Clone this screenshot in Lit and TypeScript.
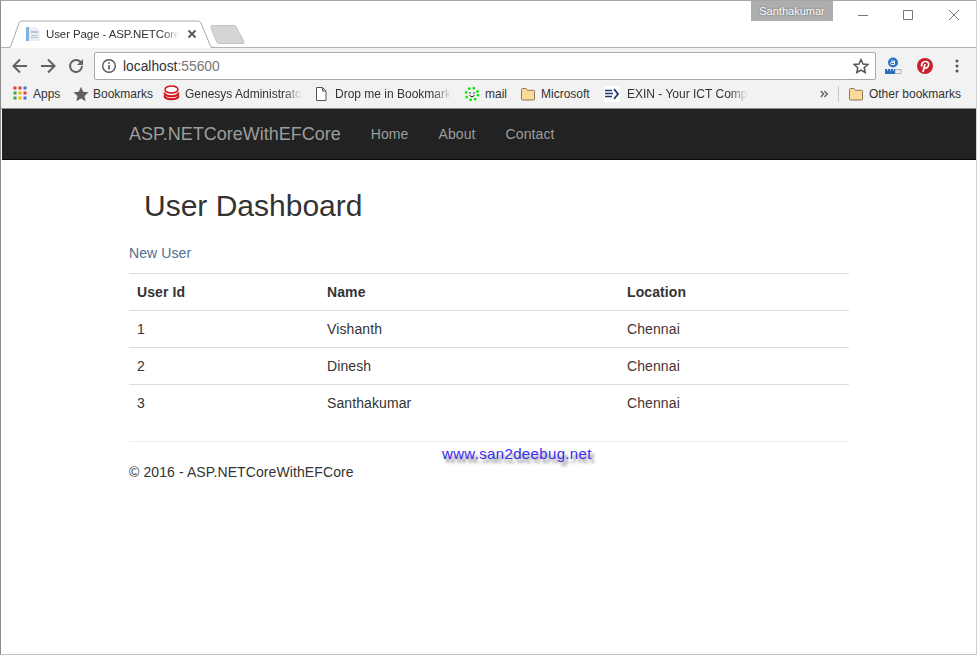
import { LitElement, html, css, svg } from "lit";
import { customElement } from "lit/decorators.js";

const folder = svg`<svg class="bm-ic" viewBox="0 0 16 16" width="16" height="16"><path d="M1.500 13V3.500q0-1 1-1h3.500l1.500 1.800h6q1 0 1 1V13q0 1-1 1h-11q-1 0-1-1z" fill="#fbd998" stroke="#8f7a55"/></svg>`;

const rows = [
  ["1", "Vishanth", "Chennai"],
  ["2", "Dinesh", "Chennai"],
  ["3", "Santhakumar", "Chennai"],
];

@customElement("app-root")
export class AppRoot extends LitElement {
  static styles = css`
    :host {
      display: block;
      width: 977px;
      height: 655px;
      overflow: hidden;
      font-family: "Liberation Sans", Arial, sans-serif;
      background: #fff;
    }
    .window {
      box-sizing: border-box;
      height: 655px;
      border-top: 1px solid #a6a6a6;
      border-left: 1px solid #8c8c8c;
      border-right: 1px solid #d0d0d0;
      border-bottom: 1px solid #c0c0c0;
      display: flex;
      flex-direction: column;
    }
    /* title strip */
    .strip {
      height: 47px;
      box-sizing: border-box;
      display: flex;
      align-items: flex-end;
      border-bottom: 1px solid #b4b4b4;
      position: relative;
      flex: none;
    }
    .tab {
      position: relative;
      width: 206px;
      height: 28px;
      margin-left: 7px;
      margin-bottom: -1px;
      display: flex;
      align-items: center;
      box-sizing: border-box;
      padding: 0 0 0 17px;
      font-size: 11.5px;
      letter-spacing: -0.1px;
      color: #333;
    }
    .tab-bg {
      position: absolute;
      left: 0;
      top: 0;
    }
    .tab > :not(.tab-bg) {
      position: relative;
    }
    .tab-title {
      margin-left: 5px;
      width: 133px;
      white-space: nowrap;
      overflow: hidden;
      -webkit-mask-image: linear-gradient(to right, #000 88%, transparent);
      mask-image: linear-gradient(to right, #000 88%, transparent);
    }
    .tab-x {
      margin-left: 8px;
    }
    .newtab {
      margin: 0 0 2px -4px;
    }
    .user {
      position: absolute;
      left: 750px;
      top: 0;
      width: 82px;
      height: 20px;
      background: #aeaeae;
      color: #fff;
      font-size: 11px;
      display: flex;
      align-items: center;
      justify-content: center;
      text-shadow: 0 0 2px #555;
    }
    .winbtns {
      position: absolute;
      right: 0;
      top: 0;
      display: flex;
    }
    .winbtns svg {
      display: block;
    }
    /* toolbar */
    .toolbar {
      height: 33px;
      box-sizing: border-box;
      background: #f2f2f2;
      display: flex;
      align-items: center;
      padding: 3px 0 0 9px;
      flex: none;
    }
    .nav-ic {
      display: block;
      margin-right: 8px;
    }
    .omni {
      box-sizing: border-box;
      width: 782px;
      height: 28px;
      background: #fff;
      border: 1px solid #a9a9a9;
      border-radius: 2px;
      display: flex;
      align-items: center;
      padding: 0 6px 0 6px;
      font-size: 13.8px;
      color: #333;
    }
    .omni .port {
      color: #777;
    }
    .omni .info {
      margin-right: 6px;
    }
    .omni .star {
      margin-left: auto;
    }
    .ext {
      display: flex;
      align-items: center;
    }
    .ext-a {
      margin-left: 7px;
    }
    .ext-p {
      margin-left: 13px;
    }
    .ext-m {
      margin-left: 21px;
    }
    /* bookmarks */
    .bookmarks {
      height: 28px;
      box-sizing: border-box;
      background: #f2f2f2;
      border-bottom: 1px solid #8f8f8f;
      display: flex;
      align-items: center;
      font-size: 12px;
      color: #333;
      padding: 0 0 2px 12px;
      white-space: nowrap;
      flex: none;
    }
    .bm {
      display: flex;
      align-items: center;
      gap: 5px;
      flex: none;
    }
    .bm.tight {
      gap: 4px;
    }
    .bm.wide {
      gap: 7px;
    }
    .w-apps {
      width: 60px;
    }
    .w-book {
      width: 90px;
    }
    .w-gen {
      width: 151px;
    }
    .w-drop {
      width: 150px;
    }
    .w-mail {
      width: 56px;
    }
    .w-ms {
      width: 84px;
    }
    .w-other {
      margin-right: 15px;
    }
    .bm-ic {
      display: block;
      flex: none;
    }
    .fade {
      white-space: nowrap;
      -webkit-mask-image: linear-gradient(to right, #000 85%, transparent);
      mask-image: linear-gradient(to right, #000 85%, transparent);
    }
    .more {
      margin-left: auto;
      display: block;
    }
    .sep {
      width: 1px;
      height: 16px;
      background: #c8c8c8;
      margin: 0 9px 0 10px;
    }
    /* page */
    .navbar {
      height: 51px;
      box-sizing: border-box;
      background: #222;
      border-bottom: 1px solid #080808;
      display: flex;
      align-items: center;
      margin-left: 1px;
      padding-left: 127px;
      flex: none;
    }
    .brand {
      color: #9d9d9d;
      font-size: 18px;
      margin-right: 30px;
    }
    .navbar a {
      color: #9d9d9d;
      font-size: 14px;
      letter-spacing: 0.1px;
      margin-right: 30px;
      text-decoration: none;
    }
    .container {
      width: 720px;
      margin-left: 128px;
      font-size: 14px;
      letter-spacing: 0.1px;
      color: #333;
      position: relative;
    }
    h2 {
      margin: 29px 0 0 15px;
      font-size: 30px;
      font-weight: 500;
      letter-spacing: 0;
      line-height: 33px;
      color: #333;
    }
    .new {
      display: block;
      margin-top: 21px;
      line-height: 20px;
      color: #4f6f93;
      text-decoration: none;
    }
    table {
      width: 720px;
      margin-top: 10px;
      border-collapse: collapse;
      table-layout: fixed;
    }
    th,
    td {
      text-align: left;
      padding: 8px;
      line-height: 20px;
      border-top: 1px solid #ddd;
      box-sizing: border-box;
    }
    .c1 {
      width: 190px;
    }
    .c2 {
      width: 300px;
    }
    .loc {
      color: #4a3333;
    }
    hr {
      margin: 20px 0 0;
      border: 0;
      border-top: 1px solid #eee;
    }
    footer {
      margin-top: 20px;
      line-height: 20px;
    }
    .mark {
      position: absolute;
      left: 313px;
      top: 285px;
      font-size: 15px;
      line-height: 18px;
      letter-spacing: 0.35px;
      color: #3a2cf0;
      text-shadow: 3px 4px 3px #888;
    }
  `;

  render() {
    return html`
      <div class="window">
        <div class="strip">
          <div class="tab">
            <svg class="tab-bg" width="206" height="28" viewBox="0 0 206 28">
              <path d="M0 28L11 3q1-2 3-2h176q2 0 3 2l10 25z" fill="#fff"/>
              <path d="M0 27.500h1q1 0 2-2L11 3q1-2 3-2h176q2 0 3 2l9 22q1 2.500 4 2.500" fill="none" stroke="#a9a9a9"/>
            </svg>
            <svg width="16" height="16" viewBox="0 0 16 16">
              <path d="M1 1h10l4 4v10H1z" fill="#e9eef5"/>
              <path d="M1 1h3v14H1z" fill="#7fb2dc"/>
              <path d="M6 5h7v2H6zM6 9h7v1H6zM6 11h7v1H6z" fill="#b5c4d6"/>
            </svg>
            <span class="tab-title">User Page - ASP.NETCore</span>
            <svg class="tab-x" width="10" height="10" viewBox="0 0 10 10">
              <path d="M1.500 1.500l7 7M8.500 1.500l-7 7" stroke="#555" stroke-width="1.800"/>
            </svg>
          </div>
          <svg class="newtab" width="36" height="20" viewBox="0 0 36 20">
            <path d="M1 1.500q0-1 1-1h22q1 0 2 1l8 15q.5 2-1 2H9q-1 0-2-1L1 3z" fill="#d5d5d5" stroke="#c4c4c4"/>
          </svg>
          <div class="user">Santhakumar</div>
          <div class="winbtns">
            <svg width="135" height="28" viewBox="0 0 135 28">
              <path d="M17 14.500h10" stroke="#777"/>
              <path d="M62.500 9.500h9v9h-9z" fill="none" stroke="#777"/>
              <path d="M108 9l10 10M118 9l-10 10" stroke="#777"/>
            </svg>
          </div>
        </div>

        <div class="toolbar">
          <svg class="nav-ic" width="20" height="20" viewBox="0 0 20 20">
            <path d="M17 10H4M10 3.500L3.500 10l6.500 6.500" fill="none" stroke="#5f6368" stroke-width="2"/>
          </svg>
          <svg class="nav-ic" width="20" height="20" viewBox="0 0 20 20">
            <path d="M3 10h13M10 3.500l6.500 6.500-6.500 6.500" fill="none" stroke="#5f6368" stroke-width="2"/>
          </svg>
          <svg class="nav-ic" width="20" height="20" viewBox="0 0 20 20">
            <path d="M14.500 6A6 6 0 1 0 16 10" fill="none" stroke="#5f6368" stroke-width="2"/>
            <path d="M17 3v6h-6z" fill="#5f6368"/>
          </svg>
          <div class="omni">
            <svg class="info" width="16" height="16" viewBox="0 0 16 16">
              <circle cx="8" cy="8" r="6.300" fill="none" stroke="#555" stroke-width="1.400"/>
              <path d="M7.200 7h1.600v4.500H7.200zM7.200 4.200h1.600v1.600H7.200z" fill="#555"/>
            </svg>
            <span>localhost<span class="port">:55600</span></span>
            <svg class="star" width="16" height="16" viewBox="0 0 16 16">
              <path d="M8 1.500l2 4.500 4.800.5-3.600 3.200 1 4.800L8 12l-4.200 2.500 1-4.800L1.200 6.500 6 6z" fill="none" stroke="#555" stroke-width="1.500"/>
            </svg>
          </div>
          <div class="ext">
            <svg class="ext-a" width="20" height="20" viewBox="0 0 20 20">
              <circle cx="10" cy="6.500" r="5" fill="#2a75c9"/>
              <path d="M8 5h3.500v3.500H8.500q-1 0-1-1t1-1h3" fill="none" stroke="#fff"/>
              <rect x="2" y="13" width="10" height="5" fill="#2a6fbe"/>
              <rect x="12" y="13.500" width="6" height="4" fill="#eee" stroke="#888" stroke-width=".6"/>
              <path d="M4.500 13v2M7.500 13v2M10.500 13v2M14.500 13.500v2" stroke="#e8eef6" stroke-width=".7"/>
            </svg>
            <svg class="ext-p" width="18" height="18" viewBox="0 0 18 18">
              <circle cx="9" cy="9" r="8" fill="#c8202c"/>
              <path d="M7 15l2-8M6 9.500C4.800 6.800 6.800 4.500 9.300 4.500c2.500 0 3.700 1.700 3.300 3.700-.4 2.300-2.700 3.600-4.300 2.300" fill="none" stroke="#fff" stroke-width="1.700"/>
            </svg>
            <svg class="ext-m" width="4" height="14" viewBox="0 0 4 14">
              <circle cx="2" cy="2" r="1.500" fill="#555"/>
              <circle cx="2" cy="7" r="1.500" fill="#555"/>
              <circle cx="2" cy="12" r="1.500" fill="#555"/>
            </svg>
          </div>
        </div>

        <div class="bookmarks">
          <div class="bm w-apps">
            <svg class="bm-ic" width="15" height="15" viewBox="0 0 15 15">
              <rect x="0.500" y="0.500" width="3" height="3" fill="#e0402f"/>
              <rect x="5.500" y="0.500" width="3" height="3" fill="#e0402f"/>
              <rect x="10.500" y="0.500" width="3" height="3" fill="#3a78d8"/>
              <rect x="0.500" y="5.500" width="3" height="3" fill="#36a852"/>
              <rect x="5.500" y="5.500" width="3" height="3" fill="#f3b400"/>
              <rect x="10.500" y="5.500" width="3" height="3" fill="#e0402f"/>
              <rect x="0.500" y="10.500" width="3" height="3" fill="#36a852"/>
              <rect x="5.500" y="10.500" width="3" height="3" fill="#f3b400"/>
              <rect x="10.500" y="10.500" width="3" height="3" fill="#3a78d8"/>
            </svg>
            Apps
          </div>
          <div class="bm tight w-book">
            <svg class="bm-ic" width="16" height="16" viewBox="0 0 16 16">
              <path d="M8 .8l2.200 4.900 5.300.6-4 3.600 1.100 5.300L8 12.500l-4.600 2.700 1.100-5.300-4-3.600 5.300-.6z" fill="#606060"/>
            </svg>
            Bookmarks
          </div>
          <div class="bm w-gen">
            <svg class="bm-ic" width="17" height="17" viewBox="0 0 17 17">
              <ellipse cx="8.500" cy="4.500" rx="6.500" ry="3.500" fill="#fff" stroke="#d3151d" stroke-width="1.500"/>
              <path d="M1.500 7.500c0 5 14 5 14 0M1.500 10.500c0 5 14 5 14 0" fill="none" stroke="#d3151d" stroke-width="2"/>
            </svg>
            <span class="fade">Genesys Administrato</span>
          </div>
          <div class="bm wide w-drop">
            <svg class="bm-ic" width="14" height="16" viewBox="0 0 14 16">
              <path d="M2.500 1.500h6l3.500 3.500v9.500h-9.500zM8.500 1.500v3.500h3.500" fill="#fff" stroke="#555"/>
            </svg>
            <span class="fade">Drop me in Bookmark</span>
          </div>
          <div class="bm w-mail">
            <svg class="bm-ic" width="16" height="16" viewBox="0 0 16 16">
              <circle cx="8" cy="8" r="6" fill="none" stroke="#0ce60c" stroke-width="2.500" stroke-dasharray="2.400 2.300"/>
              <circle cx="6" cy="7" r=".8" fill="#222"/>
              <circle cx="10" cy="7" r=".8" fill="#222"/>
              <path d="M5.500 9.500q2.500 2.500 5 0" fill="none" stroke="#222"/>
            </svg>
            mail
          </div>
          <div class="bm w-ms">${folder} Microsoft</div>
          <div class="bm wide">
            <svg class="bm-ic" width="16" height="16" viewBox="0 0 16 16">
              <rect width="16" height="16" fill="#fff"/>
              <path d="M1 4.500h7M1 7.500h8M1 10.500h7" stroke="#1c3a6e" stroke-width="1.600"/>
              <path d="M10 3l4 5-4 5" fill="none" stroke="#1c3a6e" stroke-width="1.800"/>
            </svg>
            <span class="fade">EXIN - Your ICT Comp</span>
          </div>
          <svg class="more" width="8" height="8" viewBox="0 0 8 8">
            <path d="M.8 1l2.800 3-2.800 3M4.400 1l2.800 3-2.800 3" fill="none" stroke="#666" stroke-width="1.400"/>
          </svg>
          <span class="sep"></span>
          <div class="bm w-other">${folder} Other bookmarks</div>
        </div>

        <div class="navbar">
          <span class="brand">ASP.NETCoreWithEFCore</span>
          <a>Home</a><a>About</a><a>Contact</a>
        </div>

        <div class="container">
          <h2>User Dashboard</h2>
          <a class="new">New User</a>
          <table>
            <thead>
              <tr>
                <th class="c1">User Id</th>
                <th class="c2">Name</th>
                <th>Location</th>
              </tr>
            </thead>
            <tbody>
              ${rows.map(
                (r) => html`<tr>
                  <td>${r[0]}</td>
                  <td>${r[1]}</td>
                  <td class="loc">${r[2]}</td>
                </tr>`
              )}
            </tbody>
          </table>
          <hr />
          <footer>© 2016 - ASP.NETCoreWithEFCore</footer>
          <div class="mark">www.san2deebug.net</div>
        </div>
      </div>
    `;
  }
}
